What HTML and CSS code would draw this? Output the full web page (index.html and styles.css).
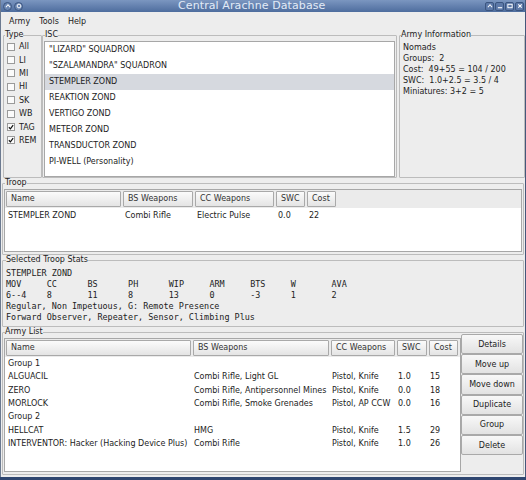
FILE: index.html
```html
<!DOCTYPE html>
<html>
<head>
<meta charset="utf-8">
<link rel="stylesheet" href="styles.css">
</head>
<body>
<div class="window">
  <div class="titlebar">
    <div class="tb-left">
      <span class="tb-round"><svg width="7" height="7" viewBox="0 0 7 7"><path d="M1 5 L3.5 2 L6 5" fill="none" stroke="#fff" stroke-width="1.2"/></svg></span>
      <span class="tb-round"><svg width="7" height="7" viewBox="0 0 7 7"><circle cx="3.5" cy="3.5" r="2.2" fill="none" stroke="#fff" stroke-width="1.1"/></svg></span>
    </div>
    <div class="tb-title">Central Arachne Database</div>
    <div class="tb-right">
      <span class="tb-btn"><svg width="7" height="7" viewBox="0 0 7 7"><path d="M1 5 L3.5 2 L6 5" fill="none" stroke="#fff" stroke-width="1.2"/></svg></span>
      <span class="tb-btn"><svg width="7" height="7" viewBox="0 0 7 7"><path d="M1 5.5 H6" stroke="#fff" stroke-width="1.3"/></svg></span>
      <span class="tb-btn"><svg width="7" height="7" viewBox="0 0 7 7"><rect x="1" y="1.5" width="5" height="4" fill="none" stroke="#fff" stroke-width="1.1"/></svg></span>
      <span class="tb-btn"><svg width="7" height="7" viewBox="0 0 7 7"><path d="M1.5 1.5 L5.5 5.5 M5.5 1.5 L1.5 5.5" stroke="#fff" stroke-width="1.3"/></svg></span>
    </div>
  </div>
  <div class="menubar">
    <span class="menu-item">Army</span>
    <span class="menu-item">Tools</span>
    <span class="menu-item">Help</span>
  </div>
  <div class="content">
    <div class="top-row">
      <fieldset class="group type-group">
        <legend>Type</legend>
        <div class="check-list">
          <div class="check"><span class="box"></span>All</div>
          <div class="check"><span class="box"></span>LI</div>
          <div class="check"><span class="box"></span>MI</div>
          <div class="check"><span class="box"></span>HI</div>
          <div class="check"><span class="box"></span>SK</div>
          <div class="check"><span class="box"></span>WB</div>
          <div class="check"><span class="box checked"><svg width="7" height="7" viewBox="0 0 7 7"><path d="M1 3.8 L2.8 5.6 L6 1.2" fill="none" stroke="#111" stroke-width="1.4"/></svg></span>TAG</div>
          <div class="check"><span class="box checked"><svg width="7" height="7" viewBox="0 0 7 7"><path d="M1 3.8 L2.8 5.6 L6 1.2" fill="none" stroke="#111" stroke-width="1.4"/></svg></span>REM</div>
        </div>
      </fieldset>
      <fieldset class="group isc-group">
        <legend>ISC</legend>
        <div class="listbox">
          <div class="list-item">"LIZARD" SQUADRON</div>
          <div class="list-item">"SZALAMANDRA" SQUADRON</div>
          <div class="list-item selected">STEMPLER ZOND</div>
          <div class="list-item">REAKTION ZOND</div>
          <div class="list-item">VERTIGO ZOND</div>
          <div class="list-item">METEOR ZOND</div>
          <div class="list-item">TRANSDUCTOR ZOND</div>
          <div class="list-item">PI-WELL (Personality)</div>
        </div>
      </fieldset>
      <fieldset class="group info-group">
        <legend>Army Information</legend>
        <div class="info-lines">
          <div>Nomads</div>
          <div>Groups:&nbsp; 2</div>
          <div>Cost:&nbsp; 49+55 = 104 / 200</div>
          <div>SWC:&nbsp; 1.0+2.5 = 3.5 / 4</div>
          <div>Miniatures: 3+2 = 5</div>
        </div>
      </fieldset>
    </div>

    <fieldset class="group troop-group">
      <legend>Troop</legend>
      <div class="table troop-table">
        <div class="thead">
          <div class="th">Name</div>
          <div class="th">BS Weapons</div>
          <div class="th">CC Weapons</div>
          <div class="th">SWC</div>
          <div class="th">Cost</div>
        </div>
        <div class="tr">
          <div class="td">STEMPLER ZOND</div>
          <div class="td">Combi Rifle</div>
          <div class="td">Electric Pulse</div>
          <div class="td">0.0</div>
          <div class="td">22</div>
        </div>
      </div>
    </fieldset>

    <fieldset class="group stats-group">
      <legend>Selected Troop Stats</legend>
      <div class="mono">
        <div class="mono-line">STEMPLER ZOND</div>
        <div class="stat-grid">
          <span>MOV</span><span>CC</span><span>BS</span><span>PH</span><span>WIP</span><span>ARM</span><span>BTS</span><span>W</span><span>AVA</span>
        </div>
        <div class="stat-grid">
          <span>6--4</span><span>8</span><span>11</span><span>8</span><span>13</span><span>0</span><span>-3</span><span>1</span><span>2</span>
        </div>
        <div class="mono-line">Regular, Non Impetuous, G: Remote Presence</div>
        <div class="mono-line">Forward Observer, Repeater, Sensor, Climbing Plus</div>
      </div>
    </fieldset>

    <fieldset class="group army-group">
      <legend>Army List</legend>
      <div class="army-body">
        <div class="table army-table">
          <div class="thead">
            <div class="th">Name</div>
            <div class="th">BS Weapons</div>
            <div class="th">CC Weapons</div>
            <div class="th">SWC</div>
            <div class="th">Cost</div>
          </div>
          <div class="tr"><div class="td">Group 1</div><div class="td"></div><div class="td"></div><div class="td"></div><div class="td"></div></div>
          <div class="tr"><div class="td">ALGUACIL</div><div class="td">Combi Rifle, Light GL</div><div class="td">Pistol, Knife</div><div class="td">1.0</div><div class="td">15</div></div>
          <div class="tr"><div class="td">ZERO</div><div class="td">Combi Rifle, Antipersonnel Mines</div><div class="td">Pistol, Knife</div><div class="td">0.0</div><div class="td">18</div></div>
          <div class="tr"><div class="td">MORLOCK</div><div class="td">Combi Rifle, Smoke Grenades</div><div class="td">Pistol, AP CCW</div><div class="td">0.0</div><div class="td">16</div></div>
          <div class="tr"><div class="td">Group 2</div><div class="td"></div><div class="td"></div><div class="td"></div><div class="td"></div></div>
          <div class="tr"><div class="td">HELLCAT</div><div class="td">HMG</div><div class="td">Pistol, Knife</div><div class="td">1.5</div><div class="td">29</div></div>
          <div class="tr"><div class="td">INTERVENTOR: Hacker (Hacking Device Plus)</div><div class="td">Combi Rifle</div><div class="td">Pistol, Knife</div><div class="td">1.0</div><div class="td">26</div></div>
        </div>
        <div class="buttons">
          <button class="btn">Details</button>
          <button class="btn">Move up</button>
          <button class="btn">Move down</button>
          <button class="btn">Duplicate</button>
          <button class="btn">Group</button>
          <button class="btn">Delete</button>
        </div>
      </div>
    </fieldset>
  </div>
  <div class="bottom-frame"></div>
</div>
</body>
</html>
```

FILE: styles.css
```css
* { box-sizing: border-box; }
html, body { margin: 0; padding: 0; }
body {
  width: 526px;
  height: 480px;
  overflow: hidden;
  background: #ececec;
  font-family: "DejaVu Sans", sans-serif;
  font-size: 8px;
  color: #1c1c1c;
}
.window {
  width: 526px;
  height: 480px;
  display: flex;
  flex-direction: column;
  background: #ededed;
  border-left: 1px solid #6c7a90;
  border-right: 1px solid #45577a;
}
.titlebar {
  height: 12px;
  flex: none;
  display: flex;
  align-items: center;
  background: linear-gradient(#7b96c0, #4e6d9e);
  color: #e2ebf7;
  overflow: hidden;
}
.tb-left { display: flex; gap: 2px; padding-left: 2px; width: 177px; }
.tb-round {
  width: 9px; height: 9px; border-radius: 50%;
  background: #6a86b2; border: 1px solid #3c5681;
  display: flex; align-items: center; justify-content: center;
}
.tb-round svg { width: 6px; height: 6px; }
.tb-title {
  font-size: 11px;
  line-height: 12px;
  letter-spacing: 0.1px;
  white-space: nowrap;
  flex: 1;
  margin-top: -1px;
}
.tb-right { display: flex; gap: 1px; padding-right: 1px; }
.tb-btn {
  width: 9px; height: 9px; border-radius: 2px;
  background: #5d79a8; border: 1px solid #3b5580;
  display: flex; align-items: center; justify-content: center;
}
.tb-btn svg { width: 6px; height: 6px; }

.menubar {
  height: 18px;
  flex: none;
  display: flex;
  align-items: center;
  padding-left: 7px;
  gap: 7px;
  color: #222;
}
.menu-item { padding: 0 1px; }

.content {
  flex: 1;
  display: flex;
  flex-direction: column;
  padding: 0 1px 0 1px;
}

.group {
  margin: 0;
  padding: 0;
  border: 1px solid #bcbcbc;
  border-radius: 1px;
  min-width: 0;
}
.group legend {
  padding: 0;
  margin-left: 1px;
  line-height: 10px;
  font-size: 8px;
  color: #222;
}

.top-row {
  height: 148px;
  display: flex;
  flex: none;
}
.type-group { width: 39px; flex: none; margin-left: 1px; }
.check-list { display: flex; flex-direction: column; padding-left: 3px; }
.check {
  height: 13.4px;
  display: flex;
  align-items: center;
  gap: 4px;
}
.box {
  width: 8px; height: 8px;
  background: #fbfbfb;
  border: 1px solid #9a9a9a;
  display: flex; align-items: center; justify-content: center;
}
.box svg { width: 6px; height: 6px; }

.isc-group { width: 355px; flex: none; padding: 0 1px 0 1px; }
.listbox {
  height: 136px;
  margin-top: 1px;
  background: #fff;
  border: 1px solid #a7a7a7;
  display: flex;
  flex-direction: column;
}
.list-item {
  height: 16px;
  line-height: 16px;
  padding-left: 4px;
  white-space: nowrap;
}
.list-item.selected { background: #d6d9df; }

.info-group { width: 126px; flex: none; margin-left: 2px; }
.info-lines { padding-left: 3px; padding-top: 2px; line-height: 11px; white-space: nowrap; }

.troop-group { height: 77px; flex: none; padding: 0 1px; }
.table {
  background: #fff;
  border: 1px solid #a7a7a7;
}
.troop-table { height: 63px; margin-top: 1px; }
.thead {
  display: grid;
  height: 18px;
  background: #ebebeb;
  padding: 1px 0 1px 1px;
}
.tr { display: grid; }
.troop-table .thead, .troop-table .tr {
  grid-template-columns: 117px 72px 81px 31px 31px;
}
.th {
  margin-right: 2px;
  border: 1px solid #a9a9a9;
  border-radius: 1px;
  background: linear-gradient(#fbfbfb, #e4e4e4);
  padding-left: 4px;
  line-height: 14px;
  white-space: nowrap;
  overflow: hidden;
  color: #333;
}
.td {
  padding-left: 3px;
  white-space: nowrap;
  overflow: hidden;
}
.troop-table .tr { height: 14px; line-height: 14px; margin-top: 1px; }

.stats-group { height: 72px; flex: none; padding: 0 2px; }
.mono {
  font-family: "DejaVu Sans Mono", monospace;
  font-size: 8.45px;
  line-height: 10.9px;
  padding-left: 1px;
  padding-top: 3px;
  color: #222;
}
.mono-line { white-space: pre; }
.stat-grid {
  display: grid;
  grid-template-columns: repeat(9, 40.7px);
  white-space: pre;
}

.army-group { height: 148px; flex: none; padding: 0 1px; }
.army-body { display: flex; }
.army-table { width: 457px; height: 134px; margin-top: 1px; flex: none; }
.army-table .thead, .army-table .tr {
  grid-template-columns: 187px 138px 66px 32px 31px;
}
.army-table .tr { height: 13.35px; line-height: 13.35px; }
.army-table .td { padding-left: 2px; }
.army-table .tr .td:first-child { padding-left: 3px; }
.buttons {
  display: flex;
  flex-direction: column;
  width: 62px;
  margin-top: -3px;
}
.btn {
  height: 20.2px;
  width: 62px;
  margin: 0;
  padding: 0;
  font-family: "DejaVu Sans", sans-serif;
  font-size: 8px;
  color: #222;
  background: linear-gradient(#f8f8f8, #e2e2e2);
  border: 1px solid #a9a9a9;
  border-radius: 2px;
}

.bottom-frame {
  height: 3px;
  flex: none;
  background: #2f4670;
  margin: 0 -1px;
}
```
